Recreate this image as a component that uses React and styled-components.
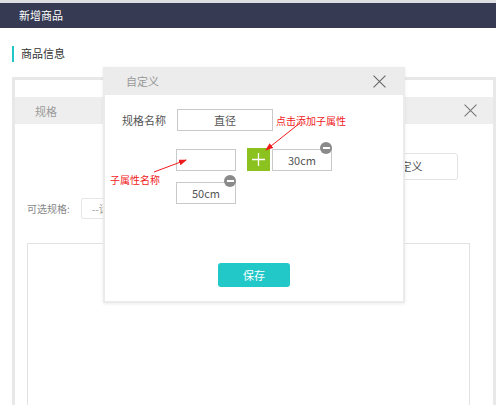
import React from "react";
import styled, { createGlobalStyle } from "styled-components";

const GlobalStyle = createGlobalStyle`
  html, body {
    margin: 0;
    padding: 0;
    background: #ffffff;
  }
  body {
    font-family: "Noto Sans CJK SC", "Noto Sans", sans-serif;
    font-size: 11px;
    color: #555;
  }
`;

const Page = styled.div`
  position: relative;
  width: 496px;
  height: 405px;
  overflow: hidden;
`;

const TopBar = styled.div`
  border-top: 3px solid #dedfe3;
  height: 25px;
  background: #363a53;
  color: #fff;
  font-size: 11px;
  line-height: 25px;
  padding-left: 19px;
`;

const SectionTitle = styled.div`
  margin: 18px 0 0 12px;
  border-left: 2px solid #22c6c8;
  height: 16px;
  line-height: 15px;
  padding-left: 7px;
  font-size: 11px;
  color: #333;
`;

const Panel = styled.div`
  margin: 15px 0 0 12px;
  border: 3px solid #e8e8e8;
  border-bottom: none;
  height: 330px;
  padding-top: 17px;
`;

const DialogHead = styled.div`
  height: 27px;
  background: #eeeeee;
  display: flex;
  align-items: center;
  justify-content: space-between;
  padding: 0 16px 0 20px;
  color: #999;
  font-size: 11px;
`;

const DialogBody = styled.div`
  padding: 0 23px 0 12px;
`;

const ActionRow = styled.div`
  display: flex;
  justify-content: flex-end;
  margin-top: 29px;
  padding-right: 12px;
`;

const GhostButton = styled.div`
  width: 102px;
  height: 25px;
  border: 1px solid #e3e3e3;
  border-radius: 3px;
  text-align: center;
  line-height: 25px;
  color: #555;
`;

const FilterRow = styled.div`
  display: flex;
  align-items: center;
  gap: 11px;
  margin-top: 18px;
  color: #888;
  font-size: 10px;
`;

const SelectBox = styled.div`
  width: 110px;
  height: 19px;
  border: 1px solid #e6e6e6;
  border-radius: 2px;
  line-height: 19px;
  padding-left: 10px;
  color: #999;
  font-size: 10px;
`;

const ListBox = styled.div`
  margin-top: 24px;
  height: 170px;
  border: 1px solid #e2e2e2;
`;

const Modal = styled.div`
  position: absolute;
  left: 103px;
  top: 67px;
  width: 298px;
  height: 234px;
  background: #fff;
  border: 2px solid #ebebeb;
  border-top: none;
  box-shadow: 0 1px 3px rgba(0, 0, 0, 0.08);
`;

const ModalHead = styled.div`
  height: 28px;
  background: #ececec;
  display: flex;
  align-items: center;
  justify-content: space-between;
  padding: 0 17px 0 21px;
  color: #999;
  font-size: 11px;
`;

const ModalBody = styled.div`
  padding: 14px 0 0 17px;
`;

const NameRow = styled.div`
  display: flex;
  align-items: center;
  height: 22px;
`;

const Label = styled.span`
  color: #555;
  width: 55px;
  font-size: 11px;
`;

const Field = styled.div`
  position: relative;
  width: ${(p) => p.w || 57}px;
  height: ${(p) => p.h || 20}px;
  border: 1px solid #c9c9c9;
  text-align: center;
  line-height: ${(p) => p.h || 20}px;
  color: #555;
  font-size: 11px;
`;

const Note = styled.span`
  color: #f0191b;
  font-size: 10px;
  margin-left: 3px;
`;

const SubList = styled.div`
  margin: 17px 0 0 54px;
  display: flex;
  flex-direction: column;
  gap: 11px;
`;

const SubRow = styled.div`
  display: flex;
  align-items: center;
`;

const PlusButton = styled.div`
  width: 23px;
  height: 23px;
  margin-left: 11px;
  margin-right: 2px;
  background: #8cc21f;
  display: flex;
  align-items: center;
  justify-content: center;
`;

const Remove = styled.div`
  position: absolute;
  right: -1px;
  top: -8px;
  width: 12px;
  height: 12px;
  border-radius: 50%;
  background: #8a8a8a;
  display: flex;
  align-items: center;
  justify-content: center;
  &::after {
    content: "";
    width: 7px;
    height: 2px;
    background: #fff;
  }
`;

const SaveRow = styled.div`
  display: flex;
  justify-content: center;
  margin: 59px 17px 0 0;
`;

const SaveButton = styled.div`
  width: 72px;
  height: 24px;
  border-radius: 3px;
  background: #22c7c8;
  color: #fff;
  text-align: center;
  line-height: 24px;
  font-size: 11px;
`;

const SideNote = styled.span`
  position: absolute;
  left: 110px;
  top: 172px;
  color: #f0191b;
  font-size: 10px;
`;

const Arrows = styled.svg`
  position: absolute;
  left: 0;
  top: 0;
  pointer-events: none;
`;

const Close = ({ size = 12, color = "#666" }) => (
  <svg width={size} height={size} viewBox="0 0 12 12">
    <path d="M0.5 0.5 L11.5 11.5 M11.5 0.5 L0.5 11.5" stroke={color} strokeWidth="1" />
  </svg>
);

const Plus = () => (
  <svg width="13" height="13" viewBox="0 0 13 13">
    <path d="M6.5 0 V13 M0 6.5 H13" stroke="#fff" strokeWidth="1.3" />
  </svg>
);

export default function App() {
  return (
    <Page>
      <GlobalStyle />
      <TopBar>新增商品</TopBar>
      <SectionTitle>商品信息</SectionTitle>
      <Panel>
        <DialogHead>
          <span>规格</span>
          <Close size={13} color="#777" />
        </DialogHead>
        <DialogBody>
          <ActionRow>
            <GhostButton>自定义</GhostButton>
          </ActionRow>
          <FilterRow>
            <span>可选规格:</span>
            <SelectBox>--请选择--</SelectBox>
          </FilterRow>
          <ListBox />
        </DialogBody>
      </Panel>

      <Modal>
        <ModalHead>
          <span>自定义</span>
          <Close size={13} color="#666" />
        </ModalHead>
        <ModalBody>
          <NameRow>
            <Label>规格名称</Label>
            <Field w={94} h={20}>直径</Field>
            <Note>点击添加子属性</Note>
          </NameRow>
          <SubList>
            <SubRow>
              <Field w={58} h={20} />
              <PlusButton>
                <Plus />
              </PlusButton>
              <Field w={58} h={20}>
                30cm
                <Remove />
              </Field>
            </SubRow>
            <SubRow>
              <Field w={58} h={20}>
                50cm
                <Remove />
              </Field>
            </SubRow>
          </SubList>
          <SaveRow>
            <SaveButton>保存</SaveButton>
          </SaveRow>
        </ModalBody>
      </Modal>

      <SideNote>子属性名称</SideNote>
      <Arrows width="496" height="405">
        <defs>
          <marker id="head" markerWidth="8" markerHeight="6" refX="7" refY="3" orient="auto" markerUnits="userSpaceOnUse">
            <path d="M0 0 L8 3 L0 6 Z" fill="#f0191b" />
          </marker>
        </defs>
        <line x1="300" y1="123" x2="266" y2="150" stroke="#f0191b" strokeWidth="1" markerEnd="url(#head)" />
        <line x1="154" y1="172" x2="186" y2="160" stroke="#f0191b" strokeWidth="1" markerEnd="url(#head)" />
      </Arrows>
    </Page>
  );
}
